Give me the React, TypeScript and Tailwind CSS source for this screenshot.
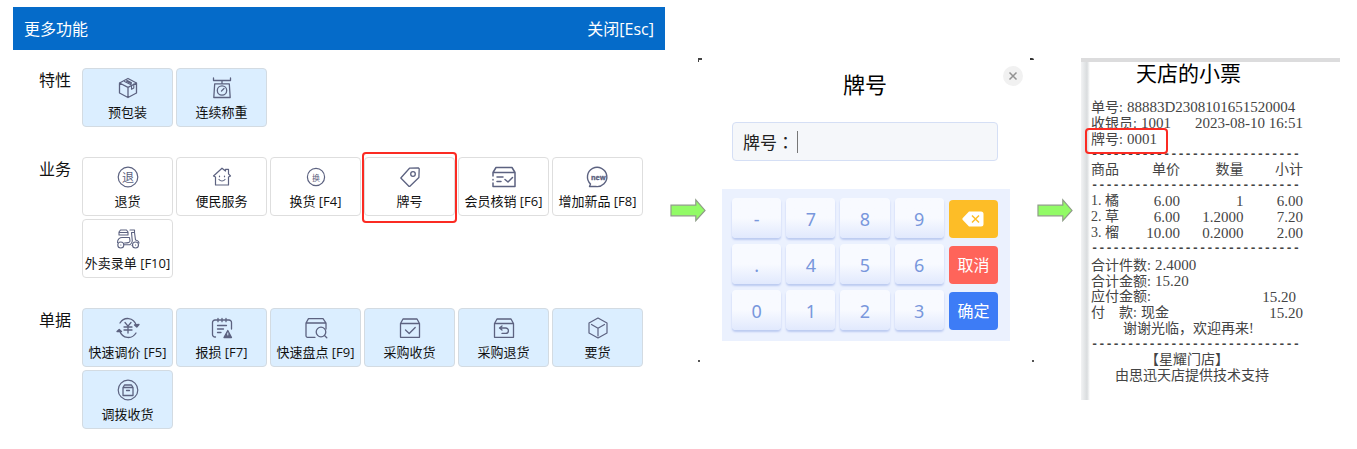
import type { ReactNode } from 'react';

type Tile = { label: string; icon: ReactNode; marked?: boolean };
type Group = { title: string; tinted: boolean; tiles: Tile[] };

function Icon({ children }: { children: ReactNode }) {
  return (
    <svg
      viewBox="0 0 24 24"
      className="h-6 w-6 shrink-0"
      fill="none"
      stroke="#5c6280"
      strokeWidth="1.3"
      strokeLinecap="round"
      strokeLinejoin="round"
      aria-hidden="true"
    >
      {children}
    </svg>
  );
}

const BoxLid = () => <path d="M2.5 7.5 5 3h14l2.500 4.500v13.800h-19zM2.500 7.500h19" />;

const packageIcon = (
  <Icon>
    <path d="M12 21.500 3.500 17V7L12 2.500 20.500 7v10zM3.500 7l8.500 4.300L20.500 7M12 11.300v10.200" />
    <path d="m8.500 5.500 7 3.500v4.300l2.300-1.200V8" strokeWidth="1.100" />
    <path d="m11 5 4 2" strokeWidth="2" />
  </Icon>
);
const scaleIcon = (
  <Icon>
    <path d="M3.500 2v2.500h17V2M12 4.500v3.300M4.700 7.800h14.600l.9 13.700H3.800z" />
    <circle cx="12" cy="14.500" r="4.700" />
    <path d="m11.500 15 2.500-2.500" />
  </Icon>
);
const charIcon = (char: string, r: number, size: string) => (
  <Icon>
    <circle cx="12" cy="12" r={r} strokeWidth="1.200" />
    <text
      x="12"
      y="12"
      textAnchor="middle"
      dominantBaseline="central"
      stroke="none"
      fill="#5c6280"
      fontSize={size}
    >
      {char}
    </text>
  </Icon>
);
const houseIcon = (
  <Icon>
    <path
      d="M3.500 11 12 3.200l3.500 2.800V4.300h3v4.500l2 2.200-2 1v8h-13v-8zM9.500 11v.7M14.500 11v.7M9 14.500c1.500 2 4.500 2 6 0"
      strokeWidth="1.200"
    />
  </Icon>
);
const tagIcon = (
  <Icon>
    <path d="m2.800 13 8.700-9.800 8.700-.4 1 .9-.3 8.800-9 8.800h-1z" />
    <circle cx="15" cy="9" r="2.300" />
  </Icon>
);
const verifyIcon = (
  <Icon>
    <path d="M1 11V7.500L4 2.500h16l3 5v14H1V18M1 7.500h22M1 14.500v.5M5 12h6M5 16.500h4M13 14.500l3 2.500 4.500-4.500" strokeWidth="1.500" />
  </Icon>
);
const newIcon = (
  <Icon>
    <path d="M4.500 19a9.700 9.700 0 1 1 5 2.500H3.500z" strokeWidth="1.400" />
    <text x="12.300" y="14.500" textAnchor="middle" stroke="#5c6280" strokeWidth=".3" fill="#5c6280" fontSize="7" fontWeight="700">
      new
    </text>
  </Icon>
);
const scooterIcon = (
  <Icon>
    <g strokeWidth="1.100">
      <path d="M3 8V5l1.500-2h6L12 5v3zM3 5.500h9" />
      <path d="M1.500 15.500C1.500 12 4 10.500 6 10.500h7.500l.5 3.500c0 1.500-4 2-5.500 2" />
      <path d="M14 3h4.500v2.500h-3l.8 8.500c-.3 2-1 3-2.300 3.800H8M18.500 5.500l1 7.500c2 .3 3.300 1.300 3.500 3M16 18.500h.5" />
      <circle cx="4.800" cy="18" r="3" />
      <circle cx="19.500" cy="18" r="3" />
      <path d="M4.800 18h.1M19.500 18h.1" />
    </g>
  </Icon>
);
const priceIcon = (
  <Icon>
    <path d="M4 7C8 .5 17.500.8 20.500 9.500M20 17C16 23.500 6.500 23.200 3.500 14.500" />
    <path d="m18.500 9 2.300 2L23 8.500zM1 15.500l2.200-2 2.300 2z" fill="#5c6280" />
    <path d="m9 6.500 3 3.700 3-3.700M12 10.200V17M8 11h8M8 14h8" />
  </Icon>
);
const lossIcon = (
  <Icon>
    <path d="M5.500 21H5a2.500 2.500 0 0 1-2.500-2.500v-12A2.500 2.500 0 0 1 5 4h14a2.500 2.500 0 0 1 2.500 2.500V13M8 2.300v3.400M16 2.300v3.400M12 2.300v3.400M7.500 9.500h9M7.500 13h6M7.500 16.500H11" />
    <path d="m17.800 14.500 3.700 7H14z" fill="#5c6280" />
    <path d="M17.800 17v2" stroke="#dbeeff" strokeWidth="1" />
  </Icon>
);
const countIcon = (
  <Icon>
    <path d="M11 21.300H3.500A1.500 1.500 0 0 1 2 19.800V7l2.500-4.300h14.500L22 7v6M2 7h20" />
    <circle cx="17" cy="16" r="4.800" />
    <path d="m20.500 19.500 2.300 2.300" />
  </Icon>
);
const receiveIcon = (
  <Icon>
    <BoxLid />
    <path d="m7.500 14 3.700 3.500 6-6" />
  </Icon>
);
const returnIcon = (
  <Icon>
    <BoxLid />
    <path d="M10 10 7.500 12l2.500 2M7.500 12h6.200a2.700 2.700 0 0 1 0 5.400H10" />
  </Icon>
);
const cubeIcon = (
  <Icon>
    <path d="m12 2 9 5v10l-9 5-9-5V7zM5.500 8.500 12 12.300l6.500-3.800M12 12.300V20" strokeWidth="1.200" />
  </Icon>
);
const transferIcon = (
  <Icon>
    <circle cx="12" cy="12" r="9.800" strokeWidth="1.200" />
    <path d="M7 9.500 8.500 7h7L17 9.500v8H7zM7 9.500h10M10.500 12.500h3" />
  </Icon>
);

const groups: Group[] = [
  {
    title: '特性',
    tinted: true,
    tiles: [
      { label: '预包装', icon: packageIcon },
      { label: '连续称重', icon: scaleIcon },
    ],
  },
  {
    title: '业务',
    tinted: false,
    tiles: [
      { label: '退货', icon: charIcon('退', 9.8, '12') },
      { label: '便民服务', icon: houseIcon },
      { label: '换货 [F4]', icon: charIcon('换', 8.6, '8') },
      { label: '牌号', icon: tagIcon, marked: true },
      { label: '会员核销 [F6]', icon: verifyIcon },
      { label: '增加新品 [F8]', icon: newIcon },
      { label: '外卖录单 [F10]', icon: scooterIcon },
    ],
  },
  {
    title: '单据',
    tinted: true,
    tiles: [
      { label: '快速调价 [F5]', icon: priceIcon },
      { label: '报损 [F7]', icon: lossIcon },
      { label: '快速盘点 [F9]', icon: countIcon },
      { label: '采购收货', icon: receiveIcon },
      { label: '采购退货', icon: returnIcon },
      { label: '要货', icon: cubeIcon },
      { label: '调拨收货', icon: transferIcon },
    ],
  },
];

function FunctionPanel() {
  return (
    <section>
      <header className="flex h-[43px] items-center justify-between bg-[#056bc9] px-[11px] text-base text-white">
        <h1>更多功能</h1>
        <button type="button">关闭[Esc]</button>
      </header>
      <div className="flex flex-col gap-[30px] pt-[18px] pr-[22px] pl-[26px]">
        {groups.map((group) => (
          <div key={group.title} className="flex">
            <h2 className="w-[43px] shrink-0 text-base leading-6 text-[#111]">{group.title}</h2>
            <div className="grid flex-1 grid-cols-6 gap-[3px]">
              {group.tiles.map((tile) => (
                <button
                  key={tile.label}
                  type="button"
                  className={`relative flex h-[59px] flex-col items-center gap-0.5 rounded border pt-[7px] text-[13px] leading-5 whitespace-nowrap text-[#111] ${
                    group.tinted ? 'border-[#d3dbe2] bg-[#dbeeff]' : 'border-[#dedede] bg-white'
                  }`}
                >
                  {tile.icon}
                  <span>{tile.label}</span>
                  {tile.marked && (
                    <span className="absolute -inset-x-[3px] -top-1.5 -bottom-2 z-10 rounded-sm border-2 border-[#fb2b23]" />
                  )}
                </button>
              ))}
            </div>
          </div>
        ))}
      </div>
    </section>
  );
}

function Arrow() {
  return (
    <svg viewBox="0 0 37 24" className="h-6 w-9" aria-hidden="true">
      <path d="M1 7h25.500V1.500L36 12.500l-9.500 10.500v-5H1z" fill="#92fb66" stroke="#8f9c88" strokeWidth="1.200" />
    </svg>
  );
}

const keyRows = [
  ['-', '7', '8', '9'],
  ['.', '4', '5', '6'],
  ['0', '1', '2', '3'],
];

const actions = [
  {
    name: '退格',
    tone: 'bg-[#fdbd27]',
    content: (
      <svg viewBox="0 0 22 16" className="h-4 w-[22px]" aria-hidden="true">
        <path d="M7 .5h12a2.500 2.500 0 0 1 2.500 2.500v10a2.500 2.500 0 0 1-2.500 2.500H7L.8 9a1.500 1.500 0 0 1 0-2z" fill="#fff" />
        <path d="m10 4.500 7 7m0-7-7 7" stroke="#fdbd27" strokeWidth="1.500" />
      </svg>
    ),
  },
  { name: '取消', tone: 'bg-[#ff645a]', content: '取消' },
  { name: '确定', tone: 'bg-[#3d7cf6]', content: '确定' },
];

function KeypadDialog() {
  return (
    <section className="relative mt-[51px] h-[304px] pt-2 pr-6 pl-6">
      <span className="absolute top-0 left-0 h-1 w-1 border-t-2 border-l border-[#444]" />
      <span className="absolute top-0 right-0 h-0.5 w-1 rounded-tr bg-[#333]" />
      <span className="absolute bottom-0 left-0 h-0.5 w-0.5 bg-[#555]" />
      <span className="absolute right-0 bottom-0 h-0.5 w-0.5 bg-[#555]" />
      <button
        type="button"
        aria-label="关闭"
        className="absolute top-2 right-[11px] flex h-5 w-5 items-center justify-center rounded-full bg-[#f1f1f1]"
      >
        <svg viewBox="0 0 10 10" className="h-2.5 w-2.5" stroke="#929292" strokeWidth="1.500" aria-hidden="true">
          <path d="m1.500 1.500 7 7m0-7-7 7" />
        </svg>
      </button>
      <h2 className="pr-0.5 text-center text-[22px] leading-9 text-black">牌号</h2>
      <div className="mt-5 mr-3 ml-2.5 flex h-[39px] items-center rounded-sm border border-[#d5dff5] bg-[#f5f7fa] pl-2.5">
        <label htmlFor="tag" className="w-[54px] shrink-0 font-['Noto_Sans_CJK_TC',sans-serif] text-[17px] text-[#222]">
          牌号：
        </label>
        <input id="tag" type="text" className="h-[22px] min-w-0 flex-1 border-l border-[#777] bg-transparent outline-none" />
      </div>
      <div className="mt-7 grid grid-cols-5 gap-x-[5px] gap-y-1.5 bg-[#ebf1fe] pt-[9px] pr-3 pb-[11px] pl-2.5">
        {keyRows.map((row, i) => [
          ...row.map((key) => (
            <button
              key={key}
              type="button"
              className="h-10 rounded bg-linear-to-b from-[#f8faff] from-50% to-[#e1e9fd] pt-0.5 font-['Noto_Sans'] text-[18px] text-[#7897dc] shadow-[0_2px_2px_#bccbf1]"
            >
              {key}
            </button>
          )),
          <button
            key={actions[i].name}
            type="button"
            aria-label={actions[i].name}
            className={`mt-0.5 flex h-[38px] items-center justify-center rounded text-base text-white ${actions[i].tone}`}
          >
            {actions[i].content}
          </button>,
        ])}
      </div>
    </section>
  );
}

function Num({ children }: { children: ReactNode }) {
  return <span className="text-[15px]">{children}</span>;
}

function Field({ name, children }: { name: string; children: ReactNode }) {
  return (
    <span>
      <span className="pr-1">{name}:</span>
      {children}
    </span>
  );
}

function Rule() {
  return (
    <div className="h-[15px] overflow-hidden font-['Liberation_Mono'] text-xs leading-4 font-bold" aria-hidden="true">
      -----------------------------
    </div>
  );
}

const items = [
  ['1. 橘', '6.00', '1', '6.00'],
  ['2. 草', '6.00', '1.2000', '7.20'],
  ['3. 榴', '10.00', '0.2000', '2.00'],
];

function Receipt() {
  return (
    <section className="mt-[51px] h-[342px] border-t-4 border-[#dcdcdd] bg-linear-to-r from-[#f2f3f4] via-[#d9dcde] via-[6px] to-white to-[9px] pr-[37px] pl-2.5 font-['Liberation_Serif','Noto_Sans_CJK_SC',serif] text-[14px] leading-4 whitespace-nowrap text-[#444]">
      <h2 className="pl-[45px] font-['Noto_Sans_CJK_SC',sans-serif] text-[21px] leading-5 text-black">天店的小票</h2>
      <p className="mt-[17px] h-4">
        <Field name="单号">
          <Num>88883D2308101651520004</Num>
        </Field>
      </p>
      <p className="flex h-4 justify-between">
        <Field name="收银员">
          <Num>1001</Num>
        </Field>
        <Num>2023-08-10 16:51</Num>
      </p>
      <p className="relative h-4">
        <Field name="牌号">
          <Num>0001</Num>
        </Field>
        <span className="absolute -top-[3px] -left-1.5 h-[26px] w-[83px] rounded-sm border-2 border-[#fb2b23]" />
      </p>
      <Rule />
      <table className="w-full table-fixed border-collapse">
        <thead>
          <tr className="h-4">
            <th className="w-[20%] p-0 text-left font-normal">商品</th>
            <th className="w-[22%] p-0 text-right font-normal">单价</th>
            <th className="w-[30%] p-0 text-right font-normal">数量</th>
            <th className="w-[28%] p-0 text-right font-normal">小计</th>
          </tr>
        </thead>
        <tbody>
          <tr>
            <td colSpan={4} className="p-0">
              <Rule />
            </td>
          </tr>
          {items.map(([name, price, count, sum]) => (
            <tr key={name} className="h-4 text-right text-[15px]">
              <td className="p-0 text-left text-[14px]">{name}</td>
              <td className="p-0">{price}</td>
              <td className="p-0">{count}</td>
              <td className="p-0">{sum}</td>
            </tr>
          ))}
        </tbody>
      </table>
      <Rule />
      <p className="mt-px h-4">
        <Field name="合计件数">
          <Num>2.4000</Num>
        </Field>
      </p>
      <p className="h-4">
        <Field name="合计金额">
          <Num>15.20</Num>
        </Field>
      </p>
      <p className="flex h-4 justify-between pr-[7px]">
        <span>应付金额:</span>
        <Num>15.20</Num>
      </p>
      <p className="flex h-4 justify-between">
        <Field name={'付\u3000款'}>现金</Field>
        <Num>15.20</Num>
      </p>
      <p className="h-4 pl-8">谢谢光临，欢迎再来!</p>
      <Rule />
      <p className="h-4 pl-[54px]">【星耀门店】</p>
      <p className="h-4 pl-6">由思迅天店提供技术支持</p>
    </section>
  );
}

export default function App() {
  return (
    <main className="grid grid-cols-[minmax(0,652fr)_33px_minmax(0,336fr)_47px_minmax(0,259fr)] items-start bg-white pt-[7px] pr-[17px] pb-5 pl-[13px] font-['Open_Sans','Noto_Sans_CJK_SC',sans-serif]">
      <FunctionPanel />
      <div className="mt-[191px] ml-[5px] w-9">
        <Arrow />
      </div>
      <KeypadDialog />
      <div className="mt-[191px] ml-[3px] w-9">
        <Arrow />
      </div>
      <Receipt />
    </main>
  );
}
